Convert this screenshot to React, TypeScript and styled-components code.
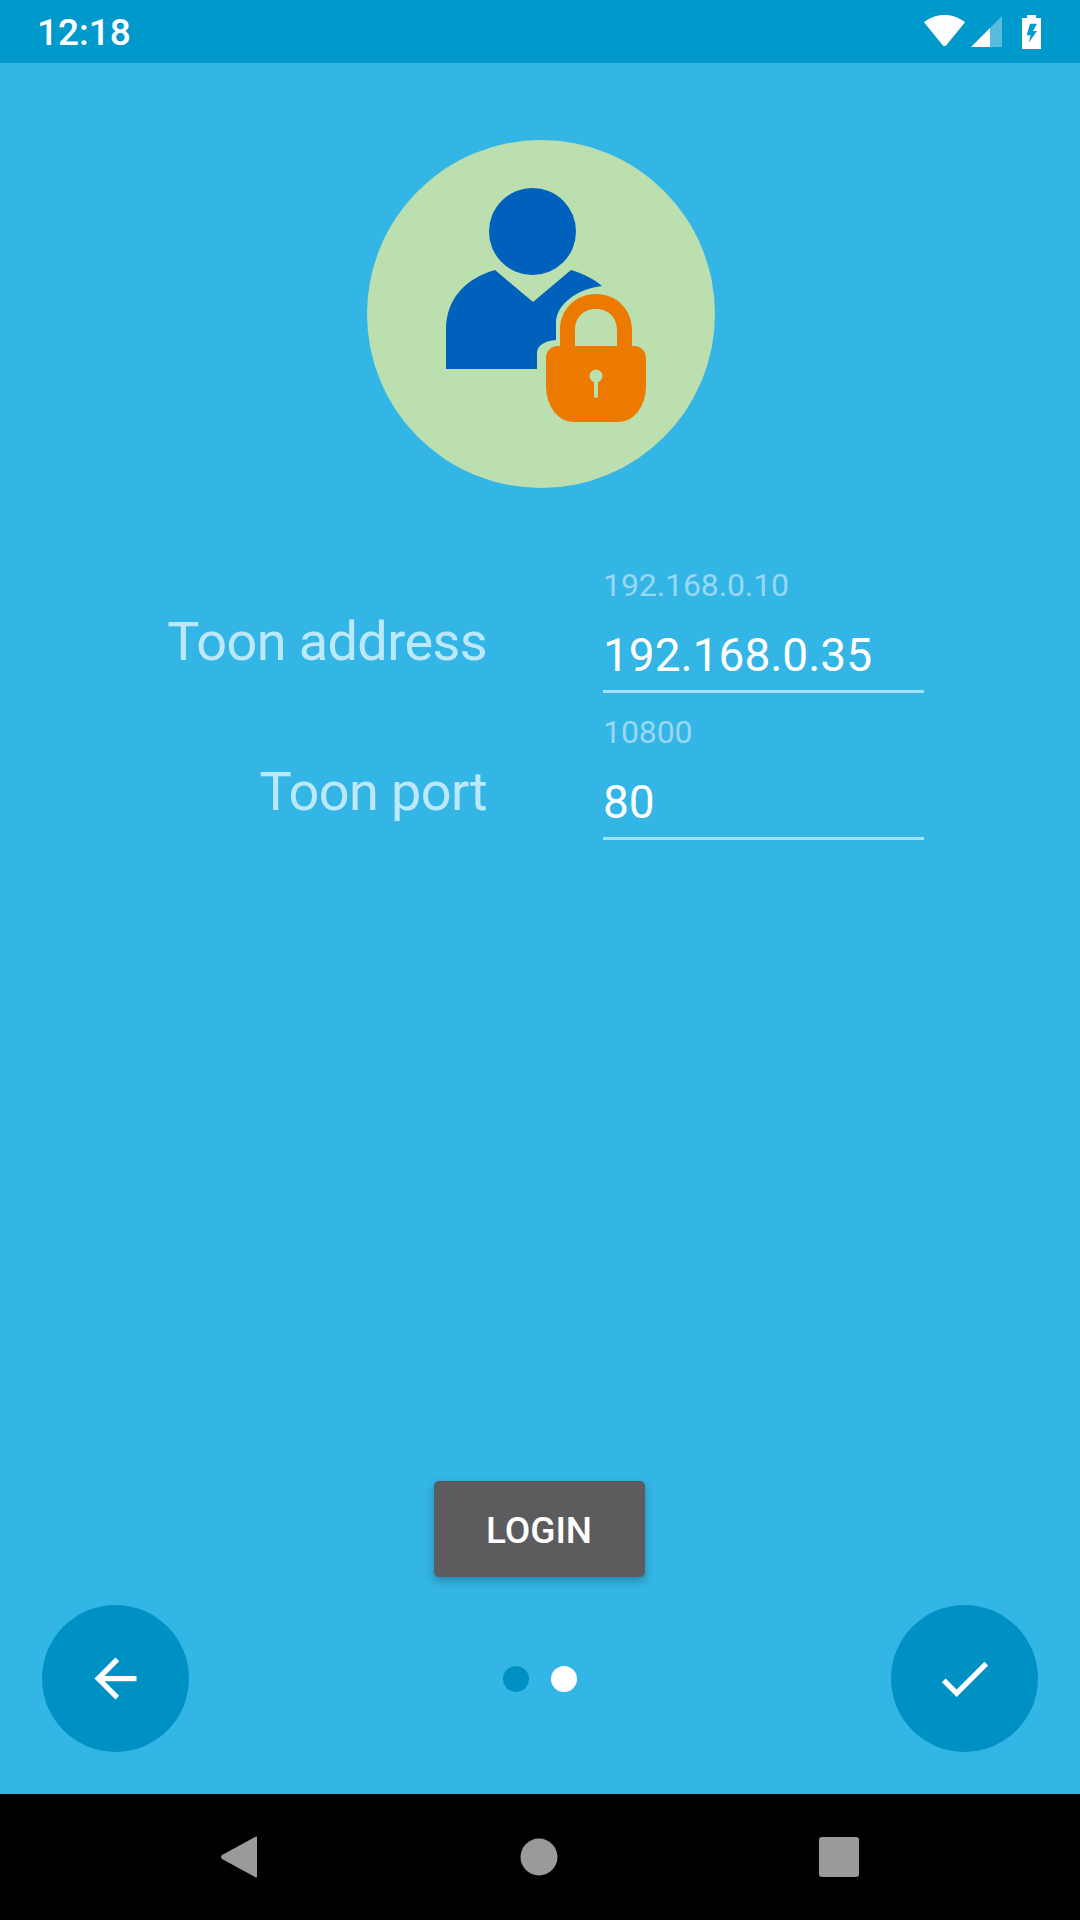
import React from 'react';
import styled, {createGlobalStyle} from 'styled-components';

const GlobalStyle = createGlobalStyle`
  html, body {
    margin: 0;
    padding: 0;
    background: #33b5e5;
    font-family: Roboto, "Liberation Sans", sans-serif;
  }
`;

const Screen = styled.div`
  width: 1080px;
  height: 1920px;
  display: flex;
  flex-direction: column;
  background: #33b5e5;
  overflow: hidden;
`;

const StatusBar = styled.div`
  flex: 0 0 63px;
  display: flex;
  align-items: center;
  justify-content: space-between;
  padding: 0 39px 0 37px;
  background: #0099cc;
`;

const Clock = styled.div`
  padding-top: 2px;
  color: #fff;
  font-size: 37px;
  font-weight: 500;
  line-height: 61px;
`;

const StatusIcons = styled.div`
  display: flex;
  align-items: center;
  gap: 6px;
`;

const WifiIcon = styled.svg`
  margin-bottom: 2px;
`;

const BatteryIcon = styled.svg`
  margin-left: 14px;
`;

const Content = styled.div`
  flex: 1;
  display: flex;
  flex-direction: column;
  align-items: center;
`;

const Avatar = styled.svg`
  margin: 77px 0 0 2px;
  flex: none;
`;

const Form = styled.div`
  align-self: stretch;
  margin-top: 79px;
  display: flex;
  flex-direction: column;
`;

const FormRow = styled.div`
  display: grid;
  grid-template-columns: 487px 321px;
  column-gap: 116px;
  height: 147px;
`;

const Label = styled.div<{$top: number}>`
  padding-top: ${p => p.$top}px;
  text-align: right;
  color: #bbe8fb;
  font-size: 54px;
  font-weight: 400;
  letter-spacing: -0.6px;
  line-height: 64px;
`;

const Field = styled.div`
  display: flex;
  flex-direction: column;
  height: 123px;
  border-bottom: 3px solid #a5e0f8;
`;

const Hint = styled.div`
  color: #99d8f3;
  font-size: 32px;
  font-weight: 400;
  letter-spacing: -0.1px;
  line-height: 36px;
`;

const Value = styled.div`
  margin-top: 25px;
  color: #fff;
  font-size: 46px;
  font-weight: 400;
  line-height: 54px;
`;

const Spacer = styled.div`
  flex: 1;
`;

const LoginButton = styled.button`
  width: 211px;
  height: 96px;
  margin-left: -2px;
  padding: 3px 0 0;
  border: 0;
  border-radius: 5px;
  background: #5c5c5e;
  box-shadow: 0 4px 8px rgba(0, 0, 0, 0.25);
  color: #fff;
  font-family: inherit;
  font-size: 37px;
  font-weight: 500;
`;

const Pager = styled.div`
  align-self: stretch;
  margin-top: 28px;
  padding: 0 42px;
  height: 147px;
  margin-bottom: 42px;
  display: flex;
  align-items: center;
  justify-content: space-between;
`;

const Fab = styled.button`
  width: 147px;
  height: 147px;
  padding: 0;
  border: 0;
  border-radius: 50%;
  background: #0091c4;
  display: flex;
  align-items: center;
  justify-content: center;
`;

const Dots = styled.div`
  display: flex;
  gap: 22px;
  margin-left: -1px;
`;

const Dot = styled.span<{$active?: boolean}>`
  width: 26px;
  height: 26px;
  border-radius: 50%;
  background: ${p => (p.$active ? '#fff' : '#0091c4')};
`;

const NavBar = styled.div`
  flex: 0 0 126px;
  display: flex;
  align-items: center;
  justify-content: center;
  gap: 261px;
  background: #000;
`;

function App() {
  return (
    <Screen>
      <GlobalStyle />
      <StatusBar>
        <Clock>12:18</Clock>
        <StatusIcons>
          <WifiIcon width="41" height="31" viewBox="0 0 41 31">
            <path d="M20.5 0C12.500 0 5.700 2.700 0 7.200L18.700 30.200Q20.500 32 22.300 30.200L41 7.200C35.300 2.700 28.500 0 20.500 0Z" fill="#fff" />
          </WifiIcon>
          <svg width="31" height="31" viewBox="0 0 31 31">
            <path d="M31 0V31H19V12Z" fill="#fff" opacity="0.35" />
            <path d="M19 12V31H0Z" fill="#fff" />
          </svg>
          <BatteryIcon width="19" height="34" viewBox="0 0 19 34">
            <path d="M5 0H14V3H19V34H0V3H5Z" fill="#fff" />
            <path d="M8 8.700H15L11 16H15L6.700 27.700L8.700 20.300H4.700Z" fill="#0099cc" />
          </BatteryIcon>
        </StatusIcons>
      </StatusBar>

      <Content>
        <Avatar width="348" height="348" viewBox="367 140 348 348">
          <circle cx="541" cy="314" r="174" fill="#bbdfae" />
          <circle cx="532.500" cy="231.500" r="43.500" fill="#0061bc" />
          <path
            d="M446 369V330C446 300 464 279 495 270L533 302L571 270C584 274 594 279 602 286C576 289 556 305 556 323V340C545 341 537 345 537 353V369Z"
            fill="#0061bc"
          />
          <path
            fillRule="evenodd"
            d="M560 346V330C560 309 576 294 596 294C616 294 632 309 632 330V346H634C641 346 646 351 646 358V386A27 36 0 0 1 619 422H573A27 36 0 0 1 546 386V358C546 351 551 346 558 346ZM575 346H617V330C617 317 608 309 596 309C584 309 575 317 575 330Z"
            fill="#ec7a00"
          />
          <circle cx="596" cy="376" r="6.500" fill="#bbdfae" />
          <path d="M596 378V396" stroke="#bbdfae" strokeWidth="4" strokeLinecap="round" />
        </Avatar>

        <Form>
          <FormRow>
            <Label $top={43}>Toon address</Label>
            <Field>
              <Hint>192.168.0.10</Hint>
              <Value>192.168.0.35</Value>
            </Field>
          </FormRow>
          <FormRow>
            <Label $top={46}>Toon port</Label>
            <Field>
              <Hint>10800</Hint>
              <Value>80</Value>
            </Field>
          </FormRow>
        </Form>

        <Spacer />
        <LoginButton>LOGIN</LoginButton>

        <Pager>
          <Fab>
            <svg width="63" height="63" viewBox="0 0 24 24">
              <path d="M20 11H7.830l5.590-5.590L12 4l-8 8 8 8 1.410-1.410L7.830 13H20v-2z" fill="#fff" />
            </svg>
          </Fab>
          <Dots>
            <Dot />
            <Dot $active />
          </Dots>
          <Fab>
            <svg width="63" height="63" viewBox="0 0 24 24">
              <path d="M9 16.170L4.830 12l-1.420 1.410L9 19 21 7l-1.410-1.410z" fill="#fff" />
            </svg>
          </Fab>
        </Pager>
      </Content>

      <NavBar>
        <svg width="38" height="42" viewBox="0 0 38 42">
          <path d="M36 1.500V40.500Q36 42 34 41L1 23Q-1 21 1 19L34 1Q36 0 36 1.500Z" fill="#9a9a9a" />
        </svg>
        <svg width="38" height="38" viewBox="0 0 38 38">
          <circle cx="19" cy="19" r="18.500" fill="#9a9a9a" />
        </svg>
        <svg width="40" height="40" viewBox="0 0 40 40">
          <rect width="40" height="40" rx="3" fill="#9a9a9a" />
        </svg>
      </NavBar>
    </Screen>
  );
}

export default App;
